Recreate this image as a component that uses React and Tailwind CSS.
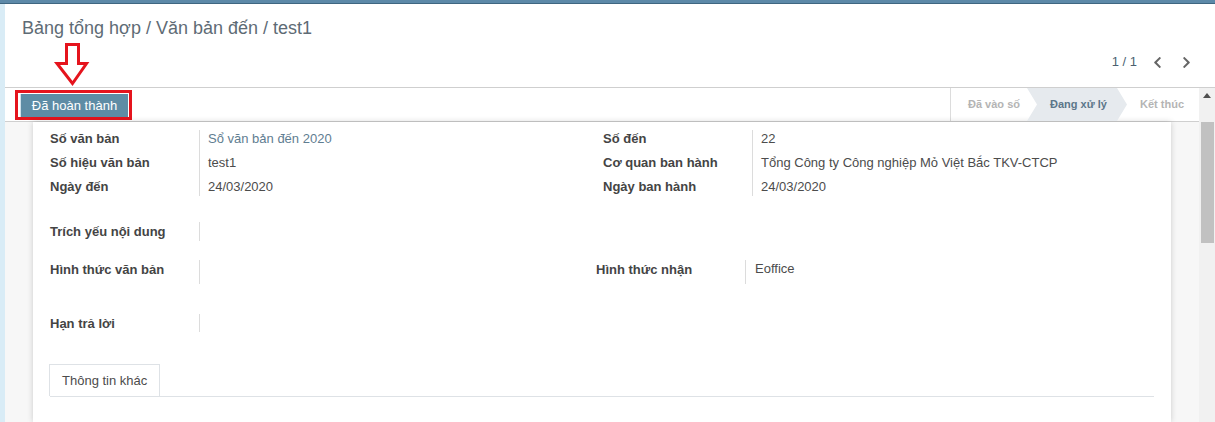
import { FaChevronLeft, FaChevronRight } from 'react-icons/fa';

const leftFields = [
  { label: 'Số văn bản', value: 'Sổ văn bản đến 2020', link: true },
  { label: 'Số hiệu văn bản', value: 'test1' },
  { label: 'Ngày đến', value: '24/03/2020' },
];

const rightFields = [
  { label: 'Số đến', value: '22' },
  { label: 'Cơ quan ban hành', value: 'Tổng Công ty Công nghiệp Mỏ Việt Bắc TKV-CTCP' },
  { label: 'Ngày ban hành', value: '24/03/2020' },
];

// nhóm trường dạng bảng: nhãn đậm + đường kẻ dọc trước giá trị
function FieldGroup({ fields }) {
  return (
    <div className="flex">
      <div className="flex flex-col w-[149px] shrink-0">
        {fields.map((f) => (
          <div key={f.label} className="h-[24px] flex items-center font-bold text-[#444]">
            {f.label}
          </div>
        ))}
      </div>
      <div className="flex flex-col border-l border-[#dcdcdc] pl-[8px] my-[3px]">
        {fields.map((f, i) => (
          <div
            key={f.label}
            className={`h-[24px] flex items-center ${f.link ? 'text-[#5f7d91]' : 'text-[#4c4c4c]'} ${i === 0 ? '-mt-[3px]' : ''} ${i === fields.length - 1 ? '-mb-[3px]' : ''}`}
          >
            {f.value}
          </div>
        ))}
      </div>
    </div>
  );
}

function SingleField({ label, value, height, labelWidth = 149 }) {
  return (
    <div className="flex items-start">
      <div className="font-bold text-[#444] leading-[18px] pt-[1px] shrink-0" style={{ width: labelWidth }}>
        {label}
      </div>
      <div className="border-l border-[#dcdcdc] pl-[9px] leading-[18px] text-[#4c4c4c]" style={{ height }}>
        {value}
      </div>
    </div>
  );
}

function StatusBar() {
  return (
    <div className="h-[34px] border-b border-[#cfcfcf] flex items-center justify-between bg-white">
      <div className="pl-[10px] flex items-center">
        <span className="border-[3px] border-[#e5141d] pl-[2px] pr-[1px] pt-[1px] flex">
          <button className="w-[108px] h-[23px] bg-[#5e8ca5] border-l border-[#cfe0ea] text-white text-[13px] leading-[23px] text-center">
            Đã hoàn thành
          </button>
        </span>
      </div>
      <div className="flex h-full items-stretch text-[11px] font-bold">
        <div className="w-[77px] border-l border-[#dcdcdc] pl-[17px] flex items-center text-[#b4b4b4]">
          Đã vào số
        </div>
        <div className="w-[100px] bg-[#e6eaee] pl-[23px] flex items-center text-[#5c7689] [clip-path:polygon(0_0,90px_0,100%_50%,90px_100%,0_100%,10px_50%)]">
          Đang xử lý
        </div>
        <div className="w-[72px] pl-[13px] flex items-center text-[#b4b4b4]">Kết thúc</div>
      </div>
    </div>
  );
}

export default function App() {
  return (
    <div
      className="relative w-[1215px] h-[422px] overflow-hidden bg-white text-[13px] text-[#4c4c4c]"
      style={{ fontFamily: '"Liberation Sans", Arial, sans-serif' }}
    >
      <div className="h-[4px] bg-[#5d89a8] border-b border-[#3f6681]" />
      <div className="flex h-[418px]">
        <div className="w-[5px] bg-[#d9ecf6] shrink-0" />
        <div className="flex-1 flex flex-col min-w-0">
          {/* control panel */}
          <div className="h-[84px] border-b border-[#cfcfcf] px-[17px] pt-[13px] flex flex-col">
            <div className="text-[18px] leading-[22px] text-[#5e6b75]">
              Bảng tổng hợp / Văn bản đến / test1
            </div>
            <div className="flex justify-end items-center mt-[13px] h-[20px]">
              <span className="mr-[12px] text-[#4c5f70]">1 / 1</span>
              <span className="w-[16px] flex justify-center text-[#666]">
                <FaChevronLeft size={13} />
              </span>
              <span className="w-[16px] ml-[13px] mr-[4px] flex justify-center text-[#666]">
                <FaChevronRight size={13} />
              </span>
            </div>
          </div>
          <div className="flex flex-1 min-h-0">
            <div className="flex-1 flex flex-col min-w-0">
              <StatusBar />
              <div className="flex-1 bg-[#f7f7f7] px-[28px]">
                <div className="h-full bg-white shadow-[0_0_6px_rgba(0,0,0,0.18)] pl-[17px] pr-[17px] pt-[5px]">
                  <div className="flex">
                    <div className="w-[553px]">
                      <FieldGroup fields={leftFields} />
                    </div>
                    <div className="flex-1">
                      <FieldGroup fields={rightFields} />
                    </div>
                  </div>
                  <div className="mt-[23px]">
                    <SingleField label="Trích yếu nội dung" value="" height={19} />
                  </div>
                  <div className="mt-[19px] flex">
                    <div className="w-[546px]">
                      <SingleField label="Hình thức văn bản" value="" height={24} />
                    </div>
                    <SingleField label="Hình thức nhận" value="Eoffice" height={24} />
                  </div>
                  <div className="mt-[30px]">
                    <SingleField label="Hạn trả lời" value="" height={18} />
                  </div>
                  <div className="mt-[31px] border-b border-[#dee2e6] flex">
                    <div className="h-[32px] px-[12px] border border-b-0 border-[#dee2e6] flex items-center text-[#4c4c4c] -ml-[1px]">
                      Thông tin khác
                    </div>
                  </div>
                </div>
              </div>
            </div>
            {/* thanh cuộn */}
            <div className="w-[16px] shrink-0 bg-[#f1f1f1] flex flex-col items-center">
              <div className="h-[15px] flex items-center justify-center">
                <svg width="8" height="5" viewBox="0 0 8 5">
                  <path d="M0 5 L4 0 L8 5 Z" fill="#505050" />
                </svg>
              </div>
              <div className="mt-[19px] w-[13px] h-[121px] bg-[#c1c1c1]" />
            </div>
          </div>
        </div>
      </div>

      {/* mũi tên chú thích */}
      <svg className="absolute left-0 top-0 pointer-events-none" width="100" height="90">
        <path
          d="M66.5 44.5 H78.5 V63.5 H86.5 L72.5 83.5 L57 63.5 H66.5 Z"
          fill="none"
          stroke="#e5141d"
          strokeWidth="3"
          strokeLinejoin="miter"
        />
      </svg>
    </div>
  );
}
